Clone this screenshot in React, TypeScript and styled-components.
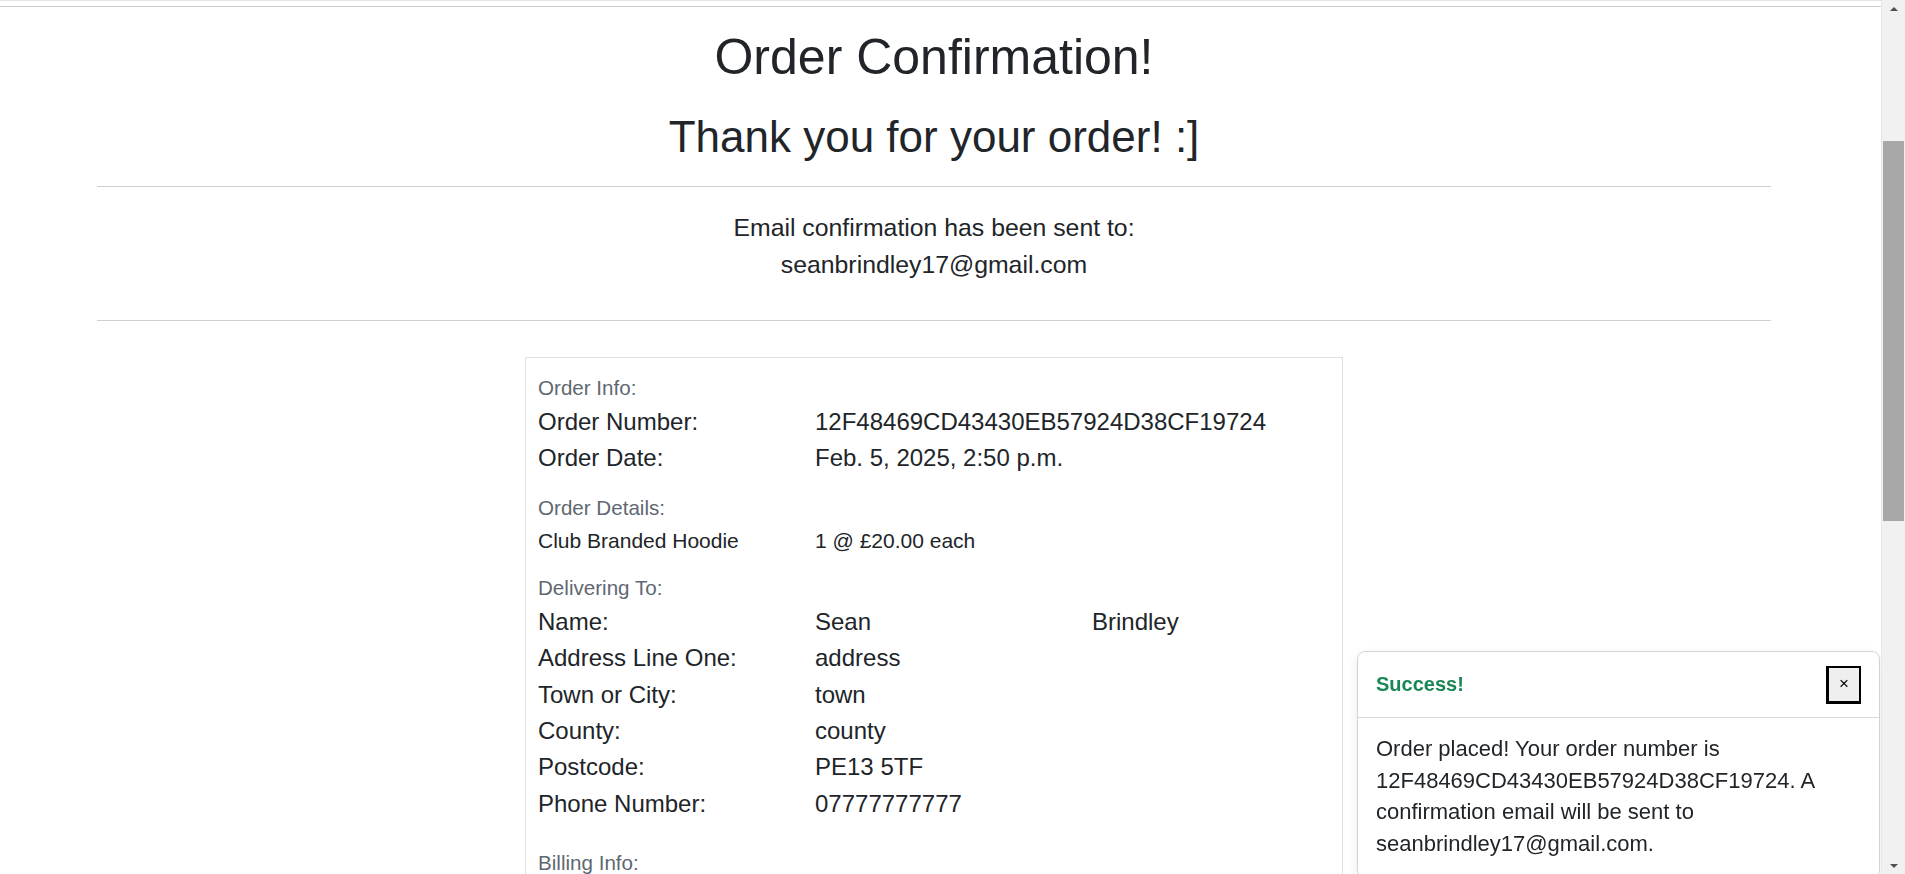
import styled, { createGlobalStyle } from "styled-components";

const GlobalStyle = createGlobalStyle`
  html, body {
    margin: 0;
    padding: 0;
    background: #fff;
  }
  body {
    font-family: "Liberation Sans", Arial, sans-serif;
    color: #212529;
  }
`;

interface Row {
  label: string;
  values: string[];
}

const orderInfo: Row[] = [
  { label: "Order Number:", values: ["12F48469CD43430EB57924D38CF19724"] },
  { label: "Order Date:", values: ["Feb. 5, 2025, 2:50 p.m."] },
];

const delivery: Row[] = [
  { label: "Name:", values: ["Sean", "Brindley"] },
  { label: "Address Line One:", values: ["address"] },
  { label: "Town or City:", values: ["town"] },
  { label: "County:", values: ["county"] },
  { label: "Postcode:", values: ["PE13 5TF"] },
  { label: "Phone Number:", values: ["07777777777"] },
];

const billing: Row[] = [
  { label: "Order Total:", values: ["£20.00"] },
  { label: "Delivery:", values: ["£2.00"] },
  { label: "Grand Total:", values: ["£22.00"] },
];

function InfoSection(props: { title: string; rows: Row[]; small?: boolean; gap?: number }) {
  const { title, rows, small, gap } = props;
  return (
    <Section $gap={gap ?? 15}>
      <SectionTitle>{title}</SectionTitle>
      {rows.map((row) => (
        <DataRow key={row.label} $small={small}>
          <span>{row.label}</span>
          {row.values.map((v) => (
            <span key={v}>{v}</span>
          ))}
        </DataRow>
      ))}
    </Section>
  );
}

function App() {
  return (
    <>
      <GlobalStyle />
      <TopEdge />
      <Container>
        <Title>Order Confirmation!</Title>
        <Subtitle>Thank you for your order! :]</Subtitle>
        <Divider />
        <EmailNote>
          Email confirmation has been sent to:
          <br />
          seanbrindley17@gmail.com
        </EmailNote>
        <Divider $bottom={36} />
        <Card>
          <InfoSection title="Order Info:" rows={orderInfo} gap={0} />
          <InfoSection
            title="Order Details:"
            rows={[{ label: "Club Branded Hoodie", values: ["1 @ £20.00 each"] }]}
            small
          />
          <InfoSection title="Delivering To:" rows={delivery} />
          <InfoSection title="Billing Info:" rows={billing} gap={25} />
        </Card>
      </Container>

      <Toast>
        <ToastHeader>
          <ToastTitle>Success!</ToastTitle>
          <CloseButton aria-label="Close">×</CloseButton>
        </ToastHeader>
        <ToastBody>
          Order placed! Your order number is 12F48469CD43430EB57924D38CF19724. A
          confirmation email will be sent to seanbrindley17@gmail.com.
        </ToastBody>
      </Toast>

      {/* the window's scrollbar, as the screenshot shows it */}
      <ScrollTrack aria-hidden>
        <ScrollArrow />
        <ScrollThumb />
        <ScrollArrow $down />
      </ScrollTrack>
    </>
  );
}

export default App;

const TopEdge = styled.div`
  height: 5px;
  border-top: 1px solid #e6e6e6;
  border-bottom: 1px solid #cfcfcf;
`;

const Container = styled.main`
  width: 1674px;
  margin-left: 97px;
  padding-bottom: 120px;
  text-align: center;
`;

const Title = styled.h1`
  margin: 20px 0 0;
  font-size: 50px;
  line-height: 60px;
  font-weight: 400;
`;

const Subtitle = styled.h2`
  margin: 23px 0 0;
  font-size: 44px;
  line-height: 53px;
  font-weight: 400;
`;

const Divider = styled.hr<{ $bottom?: number }>`
  margin: 23px 0 ${(p) => p.$bottom ?? 22}px;
  border: 0;
  border-top: 1px solid #cfcfcf;
`;

const EmailNote = styled.p`
  margin: 0 0 37px;
  font-size: 24.8px;
  line-height: 37px;
`;

const Card = styled.section`
  width: 818px;
  box-sizing: border-box;
  margin: 0 auto;
  padding: 14px 12px 20px;
  border: 1px solid #dee2e6;
  text-align: left;
`;

const Section = styled.div<{ $gap: number }>`
  margin-top: ${(p) => p.$gap}px;
`;

const SectionTitle = styled.div`
  font-size: 20.6px;
  line-height: 32px;
  color: #5f6872;
`;

const DataRow = styled.div<{ $small?: boolean }>`
  display: grid;
  grid-template-columns: 277px 277px 1fr;
  font-size: ${(p) => (p.$small ? "21px" : "24px")};
  line-height: ${(p) => (p.$small ? "33px" : "36.4px")};
  color: #212529;
`;

const Toast = styled.div`
  position: fixed;
  top: 651px;
  right: 25px;
  width: 523px;
  box-sizing: border-box;
  background: rgba(255, 255, 255, 0.96);
  border: 1px solid #d3d3d3;
  border-radius: 8px;
  box-shadow: 0 4px 12px rgba(0, 0, 0, 0.08);
  overflow: hidden;
`;

const ToastHeader = styled.div`
  display: flex;
  align-items: center;
  justify-content: space-between;
  height: 65px;
  padding: 0 18px;
  border-bottom: 1px solid #d8d8d8;
`;

const ToastTitle = styled.strong`
  color: #198754;
  font-size: 20px;
`;

const CloseButton = styled.button`
  width: 35px;
  height: 38px;
  padding: 0;
  background: #efefef;
  border: 3px solid #000;
  border-right-width: 2px;
  border-top-width: 2px;
  font-family: "Liberation Sans", Arial, sans-serif;
  font-size: 17px;
  color: #000;
  cursor: pointer;
`;

const ToastBody = styled.div`
  padding: 15px 18px 18px;
  font-size: 22px;
  line-height: 31.6px;
  color: #212529;
`;

const ScrollTrack = styled.div`
  position: fixed;
  top: 0;
  right: 0;
  width: 24px;
  height: 100vh;
  display: flex;
  flex-direction: column;
  align-items: flex-end;
  background: #f1f1f1;
  border-left: 1px solid #e8e8e8;
  box-sizing: border-box;
`;

const ScrollThumb = styled.div`
  width: 21px;
  height: 380px;
  margin: 130px 1px 0 0;
  background: #a8a8a8;
`;

const ScrollArrow = styled.div<{ $down?: boolean }>`
  align-self: center;
  width: 0;
  height: 0;
  margin-top: ${(p) => (p.$down ? "auto" : "7px")};
  margin-bottom: ${(p) => (p.$down ? "6px" : "0")};
  border-left: 4px solid transparent;
  border-right: 4px solid transparent;
  ${(p) =>
    p.$down ? "border-top: 4px solid #505050;" : "border-bottom: 4px solid #505050;"}
`;
